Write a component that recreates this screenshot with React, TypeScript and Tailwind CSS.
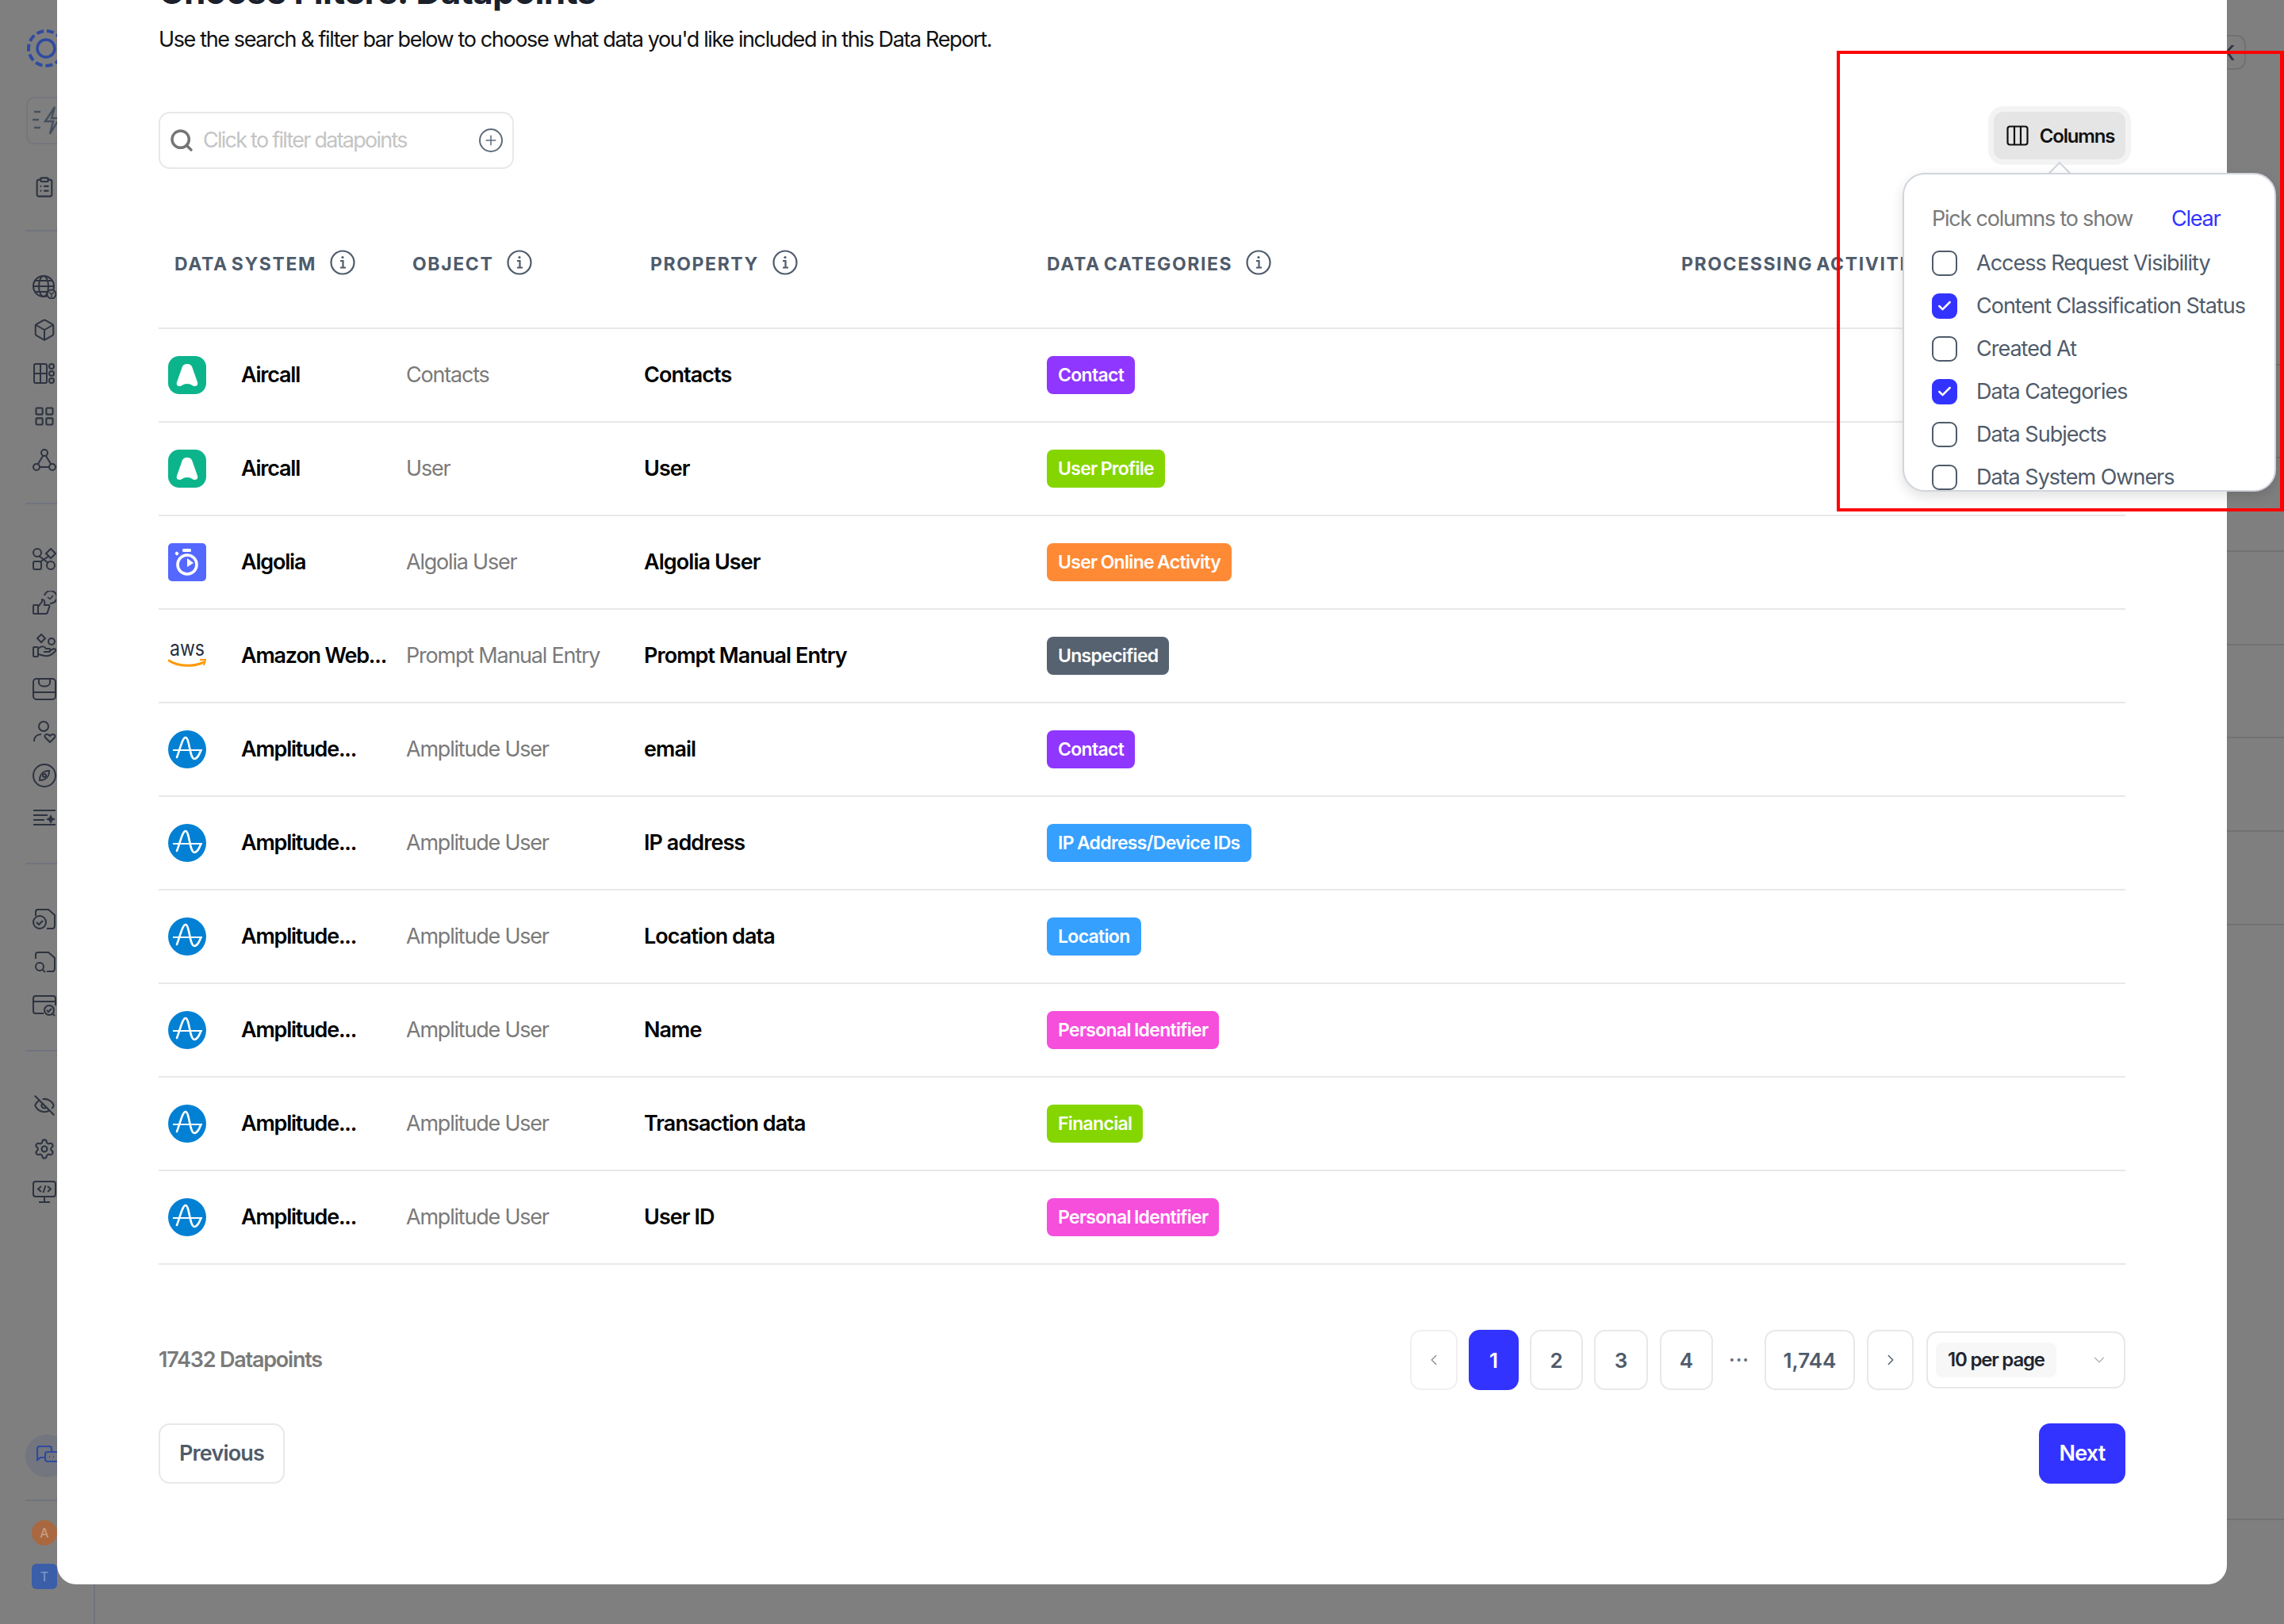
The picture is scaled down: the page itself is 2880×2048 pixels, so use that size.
import {
  Box,
  Check,
  ChevronDown,
  ChevronLeft,
  ChevronRight,
  ClipboardList,
  EyeOff,
  LayoutGrid,
  Plus,
  Search,
  Settings,
} from "lucide-react";
import type { ReactNode } from "react";

type Row = {
  logo: string;
  name: string;
  object: string;
  property: string;
  tag: string;
  tagColor: string;
};

const rows: Row[] = [
  { logo: "aircall", name: "Aircall", object: "Contacts", property: "Contacts", tag: "Contact", tagColor: "bg-[#8f36ff]" },
  { logo: "aircall", name: "Aircall", object: "User", property: "User", tag: "User Profile", tagColor: "bg-[#85d600]" },
  { logo: "algolia", name: "Algolia", object: "Algolia User", property: "Algolia User", tag: "User Online Activity", tagColor: "bg-[#ff8a36]" },
  { logo: "aws", name: "Amazon Web...", object: "Prompt Manual Entry", property: "Prompt Manual Entry", tag: "Unspecified", tagColor: "bg-[#566270]" },
  { logo: "amplitude", name: "Amplitude...", object: "Amplitude User", property: "email", tag: "Contact", tagColor: "bg-[#8f36ff]" },
  { logo: "amplitude", name: "Amplitude...", object: "Amplitude User", property: "IP address", tag: "IP Address/Device IDs", tagColor: "bg-[#36a0ff]" },
  { logo: "amplitude", name: "Amplitude...", object: "Amplitude User", property: "Location data", tag: "Location", tagColor: "bg-[#36a0ff]" },
  { logo: "amplitude", name: "Amplitude...", object: "Amplitude User", property: "Name", tag: "Personal Identifier", tagColor: "bg-[#f54fdc]" },
  { logo: "amplitude", name: "Amplitude...", object: "Amplitude User", property: "Transaction data", tag: "Financial", tagColor: "bg-[#85d600]" },
  { logo: "amplitude", name: "Amplitude...", object: "Amplitude User", property: "User ID", tag: "Personal Identifier", tagColor: "bg-[#f54fdc]" },
];

const columnOptions = [
  { label: "Access Request Visibility", checked: false },
  { label: "Content Classification Status", checked: true },
  { label: "Created At", checked: false },
  { label: "Data Categories", checked: true },
  { label: "Data Subjects", checked: false },
  { label: "Data System Owners", checked: false },
];

const Logo = ({ kind }: { kind: string }) => {
  if (kind === "aircall") {
    return (
      <svg width="48" height="48" viewBox="0 0 48 48">
        <rect width="48" height="48" rx="14" fill="#0cb48c" />
        <path d="M24 10C28 10 30 12 31 16L37 33C38 37 36 38 33 38C30 38 30 35 24 35C18 35 18 38 15 38C12 38 10 37 11 33L17 16C18 12 20 10 24 10Z" fill="#fff" />
      </svg>
    );
  }
  if (kind === "algolia") {
    return (
      <svg width="48" height="48" viewBox="0 0 48 48">
        <rect width="48" height="48" rx="5" fill="#5468ff" />
        <circle cx="24" cy="27" r="12" fill="none" stroke="#fff" strokeWidth="3.6" />
        <rect x="18" y="7" width="11" height="4" rx="1.5" fill="#fff" />
        <rect x="9" y="11" width="4" height="4" rx="1" fill="#fff" transform="rotate(-40 11 13)" />
        <path d="M24 19L32 25L24 30Z" fill="#fff" />
      </svg>
    );
  }
  if (kind === "aws") {
    return (
      <svg width="48" height="48" viewBox="0 0 48 48">
        <text x="24" y="24" textAnchor="middle" fontFamily="Inter, sans-serif" fontSize="27" fill="#252f3e" textLength="44" lengthAdjust="spacingAndGlyphs">aws</text>
        <path d="M1 30C13 38 33 38 45 32" fill="none" stroke="#ff9900" strokeWidth="3" strokeLinecap="round" />
        <path d="M40 29L47 29L45 36" fill="none" stroke="#ff9900" strokeWidth="2" />
      </svg>
    );
  }
  return (
    <svg width="48" height="48" viewBox="0 0 48 48">
      <circle cx="24" cy="24" r="24" fill="#0180d4" />
      <path d="M6 25H43" stroke="#fff" strokeWidth="2" />
      <path d="M11 34C15 24 18 9 22 9C27 9 27 36 33 36C37 36 39 31 41 26" fill="none" stroke="#fff" strokeWidth="2.6" strokeLinecap="round" />
    </svg>
  );
};

const InfoIcon = () => (
  <svg width="32" height="32" viewBox="0 0 32 32" fill="none" stroke="#4f5b6b" strokeWidth="2.2" className="shrink-0 -mt-[3px]">
    <circle cx="16" cy="16" r="14.5" />
    <path d="M13 14H16.5V22.5M13 22.5H20" />
    <circle cx="16" cy="9.5" r="1.6" fill="#4f5b6b" stroke="none" />
  </svg>
);

const HeaderCell = ({ label, width }: { label: string; width: string }) => (
  <div className={`${width} flex items-center gap-[17px] pl-[20px]`}>
    <span className="text-[23px] font-bold tracking-[0.07em] [word-spacing:-3px] whitespace-nowrap text-[#4f5b6b] pt-[3px]">{label}</span>
    <InfoIcon />
  </div>
);

const PageButton = ({ children, width, active, faded }: { children: ReactNode; width: string; active?: boolean; faded?: boolean }) => (
  <div
    className={`${width} h-[76px] flex items-center justify-center rounded-[14px] text-[26px] font-semibold ${
      active
        ? "bg-[#3333ff] text-white"
        : faded
          ? "border-2 border-[#f0f0f0] text-[#8a8f98]"
          : "border-2 border-[#e8e8e8] text-[#4f5b6b]"
    }`}
  >
    {children}
  </div>
);

const SideRow = ({ children }: { children: ReactNode }) => (
  <div className="h-[54.5px] flex items-center justify-center w-[112px] text-[#2d3340]">{children}</div>
);

const Divider = ({ className }: { className: string }) => (
  <div className={`${className} ml-[32px] w-[86px] h-[2px] bg-[#70747f]`} />
);

const Sidebar = () => (
  <div className="w-[120px] h-full shrink-0 flex flex-col border-r-2 border-[#6f737e]">
    <div className="mt-[37px] h-[48px] w-[116px] flex items-center justify-center">
      <svg width="48" height="48" viewBox="0 0 48 48" fill="none" stroke="#2f4ba0">
        <circle cx="24" cy="24" r="22" strokeWidth="4" strokeDasharray="9 4" />
        <circle cx="24" cy="24" r="11" strokeWidth="3.5" />
      </svg>
    </div>
    <div className="ml-[33px] mt-[37px] h-[60px] w-[70px] rounded-[10px] border-2 border-[#74767c] flex items-center pl-[6px]">
      <svg width="34" height="38" viewBox="0 0 34 38" fill="none" stroke="#45505f" strokeWidth="2.4">
        <path d="M2 8H10M0 18H8M2 28H10" />
        <path d="M28 2L16 20H26L22 36L34 16H24Z" />
      </svg>
    </div>
    <div className="mt-[27px]">
      <SideRow><ClipboardList size={28} strokeWidth={1.8} /></SideRow>
    </div>
    <Divider className="mt-[26px]" />
    <div className="mt-[43px]">
      <SideRow>
        <svg width="30" height="30" viewBox="0 0 30 30" fill="none" stroke="currentColor" strokeWidth="2">
          <circle cx="14" cy="14" r="13" />
          <ellipse cx="14" cy="14" rx="6" ry="13" />
          <path d="M1 14H27M3 7H25M3 21H25" />
          <circle cx="24" cy="24" r="5.5" fill="#7f7f7f" />
          <path d="M24 24L21 21.5M24 24L27 21.5M24 24V28.5" strokeWidth="1.4" />
        </svg>
      </SideRow>
      <SideRow><Box size={30} strokeWidth={1.6} /></SideRow>
      <SideRow>
        <svg width="28" height="28" viewBox="0 0 28 28" fill="none" stroke="currentColor" strokeWidth="2">
          <rect x="1" y="2" width="16" height="24" rx="2" />
          <path d="M1 14H17M9 2V26" />
          <circle cx="23" cy="5" r="3" />
          <circle cx="23" cy="14" r="3" />
          <circle cx="23" cy="23" r="3" />
        </svg>
      </SideRow>
      <SideRow><LayoutGrid size={28} strokeWidth={1.8} /></SideRow>
      <SideRow>
        <svg width="30" height="28" viewBox="0 0 30 28" fill="none" stroke="currentColor" strokeWidth="2">
          <circle cx="15" cy="5" r="4" />
          <circle cx="5" cy="23" r="4" />
          <circle cx="25" cy="23" r="4" />
          <path d="M13 9L7 19M17 9L23 19M9 23H21" />
        </svg>
      </SideRow>
    </div>
    <Divider className="mt-[27px]" />
    <div className="mt-[42px]">
      <SideRow>
        <svg width="30" height="28" viewBox="0 0 30 28" fill="none" stroke="currentColor" strokeWidth="2">
          <circle cx="6" cy="6" r="5" />
          <path d="M23 1L29 7L23 13L17 7Z" />
          <rect x="1" y="17" width="10" height="10" rx="2" />
          <circle cx="23" cy="22" r="5" />
          <path d="M8 10L20 19M21 10L9 18" />
        </svg>
      </SideRow>
      <SideRow>
        <svg width="30" height="30" viewBox="0 0 30 30" fill="none" stroke="currentColor" strokeWidth="2">
          <rect x="1" y="18" width="6" height="11" rx="1" />
          <path d="M7 20L12 14V11C15 11 16 14 15 18H20C21 18 22 19 21 21L19 27C19 28 18 29 16 29H7" />
          <path d="M15 6A8 8 0 1 1 22 16" />
          <path d="M19 8L22 10.5L26 6" strokeWidth="1.6" />
        </svg>
      </SideRow>
      <SideRow>
        <svg width="30" height="30" viewBox="0 0 30 30" fill="none" stroke="currentColor" strokeWidth="2">
          <path d="M11 1L16 6L11 11L6 6Z" />
          <circle cx="24" cy="10" r="4" />
          <rect x="1" y="17" width="6" height="12" rx="1" />
          <path d="M7 19C12 15 15 16 17 19H21C23 19 23 23 21 23H14M21 22L27 19C29 19 30 21 28 23C24 27 19 29 15 28L7 26" />
        </svg>
      </SideRow>
      <SideRow>
        <svg width="30" height="28" viewBox="0 0 30 28" fill="none" stroke="currentColor" strokeWidth="2">
          <rect x="1" y="1" width="28" height="26" rx="4" />
          <path d="M1 18H29M8 1V6C8 12 22 12 22 6V1" />
        </svg>
      </SideRow>
      <SideRow>
        <svg width="30" height="28" viewBox="0 0 30 28" fill="none" stroke="currentColor" strokeWidth="2">
          <circle cx="14" cy="7" r="6" />
          <path d="M2 26C2 20 6 17 11 17" />
          <path d="M22 27L16 21C14 18 18 15 22 19C26 15 30 18 28 21Z" />
        </svg>
      </SideRow>
      <SideRow>
        <svg width="30" height="30" viewBox="0 0 30 30" fill="none" stroke="currentColor" strokeWidth="2">
          <circle cx="15" cy="15" r="14" />
          <path d="M21 9C21 16 17 21 9 21C9 14 13 9 21 9Z" />
          <circle cx="15" cy="15" r="2" />
        </svg>
      </SideRow>
      <SideRow>
        <svg width="30" height="24" viewBox="0 0 30 24" fill="none" stroke="currentColor" strokeWidth="2">
          <path d="M1 2H29M1 8H19M1 14H15M1 20H29" />
          <path d="M23 7L25 11L29 13L25 15L23 19L21 15L17 13L21 11Z" fill="currentColor" stroke="none" />
        </svg>
      </SideRow>
    </div>
    <Divider className="mt-[28px]" />
    <div className="mt-[42px]">
      <SideRow>
        <svg width="30" height="28" viewBox="0 0 30 28" fill="none" stroke="currentColor" strokeWidth="2">
          <path d="M4 10V5C4 3 5 2 7 2H20L28 9V22C28 24 27 26 25 26H18" />
          <circle cx="9" cy="18" r="8" />
          <path d="M5 18L8 21L13 16" />
        </svg>
      </SideRow>
      <SideRow>
        <svg width="30" height="28" viewBox="0 0 30 28" fill="none" stroke="currentColor" strokeWidth="2">
          <path d="M4 10V5C4 3 5 2 7 2H20L28 9V22C28 24 27 26 25 26H18" />
          <circle cx="9" cy="20" r="5" />
          <path d="M13 24L16 27" />
        </svg>
      </SideRow>
      <SideRow>
        <svg width="30" height="28" viewBox="0 0 30 28" fill="none" stroke="currentColor" strokeWidth="2">
          <path d="M14 24H4C2 24 1 23 1 21V5C1 3 2 2 4 2H26C28 2 29 3 29 5V14M1 9H29" />
          <circle cx="21" cy="20" r="6" />
          <path d="M18 20L20 22L24 18M25 24L28 27" />
        </svg>
      </SideRow>
    </div>
    <Divider className="mt-[29px]" />
    <div className="mt-[41px]">
      <SideRow><EyeOff size={28} strokeWidth={1.8} /></SideRow>
      <SideRow><Settings size={28} strokeWidth={1.8} /></SideRow>
      <SideRow>
        <svg width="30" height="28" viewBox="0 0 30 28" fill="none" stroke="currentColor" strokeWidth="2">
          <rect x="1" y="1" width="28" height="19" rx="3" />
          <path d="M15 20V27M8 27H22M11 7L7 10.5L11 14M19 7L23 10.5L19 14M16.5 6L13.5 15" />
        </svg>
      </SideRow>
    </div>
    <div className="ml-[32px] mt-[278px] w-[54px] h-[54px] rounded-full bg-[#73767f] flex items-center pl-[14px]">
      <svg width="32" height="26" viewBox="0 0 32 26" fill="none" stroke="#2f4ba0" strokeWidth="2.2">
        <path d="M10 15H5L1 18V4C1 2 2 1 4 1H16C18 1 19 2 19 4V7" />
        <rect x="11" y="8" width="20" height="12" rx="3" />
        <path d="M16 14H17M21 14H22M26 14H27" />
      </svg>
    </div>
    <Divider className="mt-[28px]" />
    <div className="ml-[40px] mt-[24px] w-[32px] h-[32px] rounded-full bg-[#a9683f] flex items-center justify-center text-[16px] font-medium text-[#c89c80]">A</div>
    <div className="ml-[40px] mt-[23px] w-[32px] h-[32px] rounded-[6px] bg-[#3b5ea8] flex items-center justify-center text-[16px] font-medium text-[#7c95c4]">T</div>
  </div>
);

const BackgroundRows = () => (
  <div className="flex-1 h-full flex flex-col pt-[343px]">
    {[0, 1, 2, 3, 4, 5, 6].map((i) => (
      <div key={i} className="h-[117.67px] border-b-2 border-[#717171]" />
    ))}
    <div className="h-[750px] border-b-2 border-[#717171]" />
  </div>
);

export default function App() {
  return (
    <div className="relative w-[2880px] h-[2048px] overflow-hidden bg-[#7f7f7f] flex [font-family:Inter,sans-serif]">
      <Sidebar />
      <BackgroundRows />
      <div className="absolute right-[48px] top-[44px] w-[70px] h-[44px] rounded-[12px] border-2 border-[#717171] flex items-center justify-end pr-[12px] text-[26px] font-medium text-[#2d3340]">
        K
      </div>

      {/* modal */}
      <div className="absolute left-[72px] top-0 w-[2736px] h-[1998px] bg-white rounded-b-[24px] overflow-hidden px-[128px] flex flex-col">
        <h1 className="-mt-[39px] h-[56px] leading-[56px] text-[44px] font-bold tracking-[-0.015em] text-[#1a202c] whitespace-nowrap">
          Choose Filters: Datapoints
        </h1>
        <p className="mt-[13px] h-[40px] leading-[40px] text-[27px] tracking-[-0.051em] text-[#111111] whitespace-nowrap">
          Use the search &amp; filter bar below to choose what data you'd like included in this Data Report.
        </p>

        <div className="mt-[71px] flex justify-between items-start">
          <div className="w-[448px] h-[72px] rounded-[14px] border-2 border-[#e8e8e8] flex items-center pl-[11px] pr-[12px]">
            <Search size={32} strokeWidth={2.6} className="text-[#757575]" />
            <span className="ml-[11px] flex-1 text-[27px] tracking-[-0.065em] text-[#c4c4c4]">Click to filter datapoints</span>
            <span className="w-[30px] h-[30px] rounded-full border-2 border-[#5f6b7a] flex items-center justify-center text-[#5f6b7a]">
              <Plus size={20} strokeWidth={1.8} />
            </span>
          </div>
          <div className="w-[166px] h-[60px] rounded-[12px] bg-[#e5e5e5] ring-[7px] ring-[#f3f3f3] flex items-center justify-center gap-[14px]">
            <svg width="28" height="26" viewBox="0 0 28 26" fill="none" stroke="#111" strokeWidth="2.2" className="ml-[2px]">
              <rect x="1.5" y="1.5" width="25" height="23" rx="3" />
              <path d="M10 1.5V24.5M18 1.5V24.5" />
            </svg>
            <span className="pt-[2px] text-[24px] font-semibold tracking-[-0.05em] text-[#111]">Columns</span>
          </div>
        </div>

        <div className="mt-[38px] h-[164px] border-b-2 border-[#e8e8e8] flex items-center">
          <HeaderCell label="DATA SYSTEM" width="w-[300px]" />
          <HeaderCell label="OBJECT" width="w-[300px]" />
          <HeaderCell label="PROPERTY" width="w-[500px]" />
          <HeaderCell label="DATA CATEGORIES" width="w-[800px]" />
          <HeaderCell label="PROCESSING ACTIVITIES" width="w-[400px]" />
        </div>

        {rows.map((row, i) => (
          <div key={i} className="h-[118px] shrink-0 border-b-2 border-[#e8e8e8] flex items-center">
            <div className="w-[104px] pl-[12px] shrink-0">
              <Logo kind={row.logo} />
            </div>
            <div className="w-[208px] shrink-0 pt-[1px] text-[27px] font-semibold tracking-[-0.045em] text-black whitespace-nowrap">{row.name}</div>
            <div className="w-[300px] shrink-0 pt-[1px] text-[27px] tracking-[-0.045em] text-[#7a7a7a] whitespace-nowrap">{row.object}</div>
            <div className="w-[508px] shrink-0 pt-[1px] text-[27px] font-semibold tracking-[-0.035em] text-black whitespace-nowrap">{row.property}</div>
            <div>
              <span className={`${row.tagColor} inline-flex items-center h-[48px] px-[14px] rounded-[8px] text-[23px] font-semibold tracking-[-0.03em] [word-spacing:-1px] text-white whitespace-nowrap`}>
                {row.tag}
              </span>
            </div>
          </div>
        ))}

        <div className="mt-[82px] h-[76px] flex items-center justify-between">
          <span className="text-[27px] font-semibold tracking-[-0.045em] text-[#7a7a7a]">17432 Datapoints</span>
          <div className="flex items-center">
            <PageButton width="w-[60px]" faded><ChevronLeft size={22} strokeWidth={1.5} /></PageButton>
            <div className="ml-[14px]"><PageButton width="w-[63px]" active>1</PageButton></div>
            <div className="ml-[14px]"><PageButton width="w-[67px]">2</PageButton></div>
            <div className="ml-[14px]"><PageButton width="w-[68px]">3</PageButton></div>
            <div className="ml-[15px]"><PageButton width="w-[67px]">4</PageButton></div>
            <span className="w-[65px] text-center text-[30px] leading-none text-[#6b7280] -mt-[2px]">···</span>
            <PageButton width="w-[114px]">1,744</PageButton>
            <div className="ml-[15px]"><PageButton width="w-[59px]"><ChevronRight size={22} strokeWidth={1.5} /></PageButton></div>
            <div className="ml-[16px] w-[251px] h-[72px] rounded-[14px] border-2 border-[#e8e8e8] flex items-center pl-[10px] pr-[20px] justify-between">
              <span className="h-[44px] flex items-center px-[15px] rounded-[8px] bg-[#f7f7f7] text-[24px] font-semibold tracking-[-0.05em] text-[#1f2530]">10 per page</span>
              <ChevronDown size={22} strokeWidth={1.5} className="text-[#b5b5b5]" />
            </div>
          </div>
        </div>

        <div className="mt-[42px] flex items-center justify-between">
          <div className="w-[159px] h-[76px] rounded-[14px] border-2 border-[#e8e8e8] flex items-center justify-center text-[27px] font-semibold tracking-[-0.03em] text-[#4f5b6b]">Previous</div>
          <div className="w-[109px] h-[76px] rounded-[14px] bg-[#3333ff] flex items-center justify-center text-[27px] font-semibold tracking-[-0.03em] text-white">Next</div>
        </div>
      </div>

      {/* columns popover */}
      <div className="absolute left-[2399px] top-[218px] w-[471px] h-[402px]">
        <div className="absolute left-[188px] -top-[10px] w-[20px] h-[20px] rotate-45 bg-white border-l-2 border-t-2 border-[#d0d5dd]" />
        <div className="relative w-full h-full rounded-[28px] border-2 border-[#d0d5dd] bg-white overflow-hidden shadow-[0_6px_16px_rgba(0,0,0,0.12)] pl-[35px] pt-[36px]">
          <div className="h-[40px] flex items-center text-[27px] tracking-[-0.045em]">
            <span className="w-[302px] text-[#7a7a7a]">Pick columns to show</span>
            <span className="text-[#3333ff]">Clear</span>
          </div>
          <div className="mt-[9px]">
            {columnOptions.map((opt) => (
              <div key={opt.label} className="h-[54px] flex items-center gap-[24px]">
                {opt.checked ? (
                  <span className="w-[32px] h-[32px] rounded-[9px] bg-[#3333ff] flex items-center justify-center text-white">
                    <Check size={20} strokeWidth={3} />
                  </span>
                ) : (
                  <span className="w-[32px] h-[32px] rounded-[9px] border-2 border-[#4f5b6b]" />
                )}
                <span className="pt-[1px] text-[27px] tracking-[-0.037em] text-[#4f5b6b] whitespace-nowrap">{opt.label}</span>
              </div>
            ))}
          </div>
        </div>
      </div>

      {/* red annotation box */}
      <div className="absolute left-[2316px] top-[64px] w-[564px] h-[581px] border-4 border-r-[5px] border-[#ff0000]" />
    </div>
  );
}
